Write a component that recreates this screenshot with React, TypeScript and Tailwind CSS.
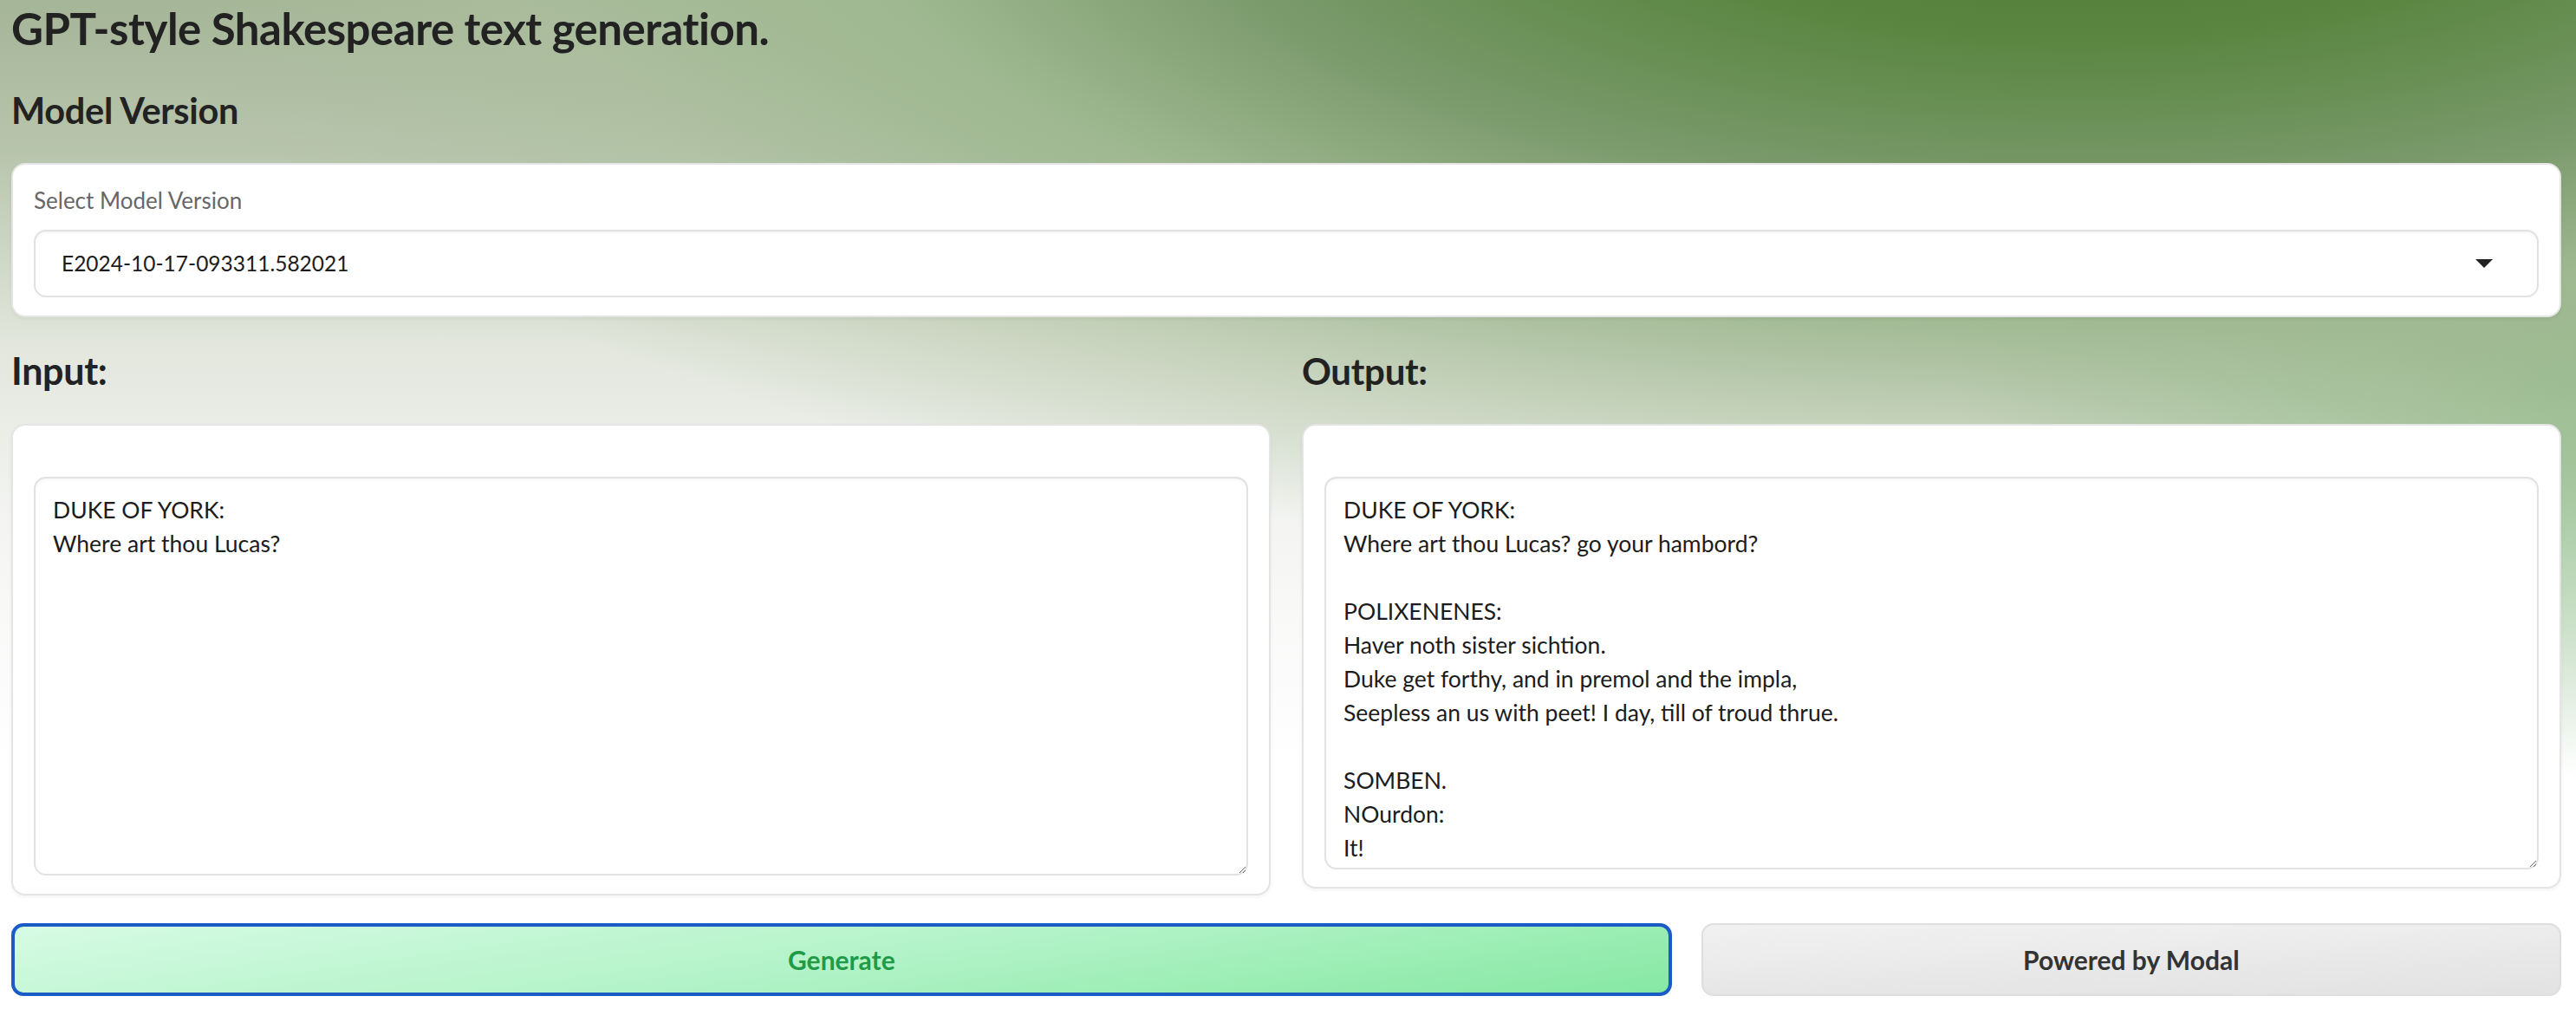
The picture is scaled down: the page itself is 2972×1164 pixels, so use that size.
import React from 'react';

const outputText = `DUKE OF YORK:
Where art thou Lucas? go your hambord?

POLIXENENES:
Haver noth sister sichtion.
Duke get forthy, and in premol and the impla,
Seepless an us with peet! I day, till of troud thrue.

SOMBEN.
NOurdon:
It!
Thy lord, and so.`;

const inputText = `DUKE OF YORK:
Where art thou Lucas?`;

function TextCard({ value, cardH, areaH }: { value: string; cardH: string; areaH: string }) {
  return (
    <div
      className={[
        'flex flex-col rounded-[16px] border-2 border-[#e4e4e4] bg-white px-[24px] pt-[59px] shadow-[0_2px_4px_rgba(0,0,0,0.05)]',
        cardH,
      ].join(' ')}
    >
      <textarea
        readOnly
        value={value}
        className={[
          'w-full resize-y overflow-hidden rounded-[14px] border-2 border-[#e2e2e2] bg-white px-[20px] pt-[17px] text-[26.5px] leading-[39px] text-[#1c1c1c] shadow-[inset_0_2px_3px_rgba(0,0,0,0.04)] outline-none',
          areaH,
        ].join(' ')}
      />
    </div>
  );
}

export default function App() {
  return (
    <div className="relative min-h-screen w-full overflow-hidden bg-white font-['Lato',sans-serif] text-[#1f1f1f]">
      {/* fondo degradado verde */}
      <div className="pointer-events-none absolute inset-x-0 top-0 h-[1100px] bg-[radial-gradient(ellipse_2300px_820px_at_2400px_-150px,#4a722d_0%,#5a8641_24%,#79996a_44%,#9fb891_62%,rgba(172,192,158,0.55)_80%,rgba(255,255,255,0)_100%),radial-gradient(ellipse_1000px_650px_at_3050px_380px,rgba(118,175,115,0.95)_0%,rgba(150,195,145,0.6)_45%,rgba(255,255,255,0)_80%),linear-gradient(180deg,#a5b597_0%,#b8c5ad_16%,#e2e6dc_36%,#f4f5f3_55%,#ffffff_80%)]" />

      <div className="relative flex flex-col pl-[13px] pr-[17px]">
        <h1 className="h-[66px] text-[51px] font-bold leading-[66px] tracking-[-0.5px] text-[#222]">
          GPT-style Shakespeare text generation.
        </h1>

        <h2 className="mt-[37px] h-[48px] text-[41.5px] font-bold leading-[48px] tracking-[-0.3px] text-[#222]">
          Model Version
        </h2>

        {/* selector de modelo */}
        <div className="mt-[37px] flex h-[178px] flex-col rounded-[16px] border-2 border-[#e4e4e4] bg-white px-[24px] shadow-[0_2px_4px_rgba(0,0,0,0.05)]">
          <span className="mt-[23px] text-[26px] leading-[36px] text-[#676767]">Select Model Version</span>
          <div className="mt-[16px] flex h-[78px] items-center justify-between rounded-[14px] border-2 border-[#e2e2e2] bg-white pl-[30px] pr-[50px] shadow-[inset_0_2px_3px_rgba(0,0,0,0.04)]">
            <span className="text-[24.5px] text-[#1c1c1c]">E2024-10-17-093311.582021</span>
            <svg width="22" height="12" viewBox="0 0 22 12">
              <path d="M1 1 L21 1 L11 11 Z" fill="#222" />
            </svg>
          </div>
        </div>

        {/* entrada / salida */}
        <div className="mt-[38px] grid grid-cols-2 gap-[36px]">
          <div className="flex flex-col">
            <h3 className="h-[48px] text-[43px] font-bold leading-[48px] tracking-[-0.3px] text-[#222]">Input:</h3>
            <div className="mt-[37px]">
              <TextCard value={inputText} cardH="h-[544px]" areaH="h-[460px]" />
            </div>
          </div>
          <div className="flex flex-col">
            <h3 className="h-[48px] text-[42px] font-bold leading-[48px] tracking-[-0.3px] text-[#222]">Output:</h3>
            <div className="mt-[37px]">
              <TextCard value={outputText} cardH="h-[536px]" areaH="h-[453px]" />
            </div>
          </div>
        </div>

        {/* botones */}
        <div className="mt-[32px] grid grid-cols-[1917fr_993fr] gap-[34px]">
          <button
            type="button"
            className="flex h-[84px] items-center justify-center rounded-[14px] border-4 border-[#1a5bc6] bg-[linear-gradient(172deg,#d6fbe4_0%,#b3f3c8_50%,#86e8a3_100%)] text-[30px] font-bold text-[#1f9a47]"
          >
            Generate
          </button>
          <button
            type="button"
            className="flex h-[84px] items-center justify-center rounded-[14px] border-2 border-[#dedede] bg-[linear-gradient(178deg,#f1f1f1_0%,#e2e2e2_100%)] text-[30px] font-bold text-[#333]"
          >
            Powered by Modal
          </button>
        </div>
      </div>
    </div>
  );
}
